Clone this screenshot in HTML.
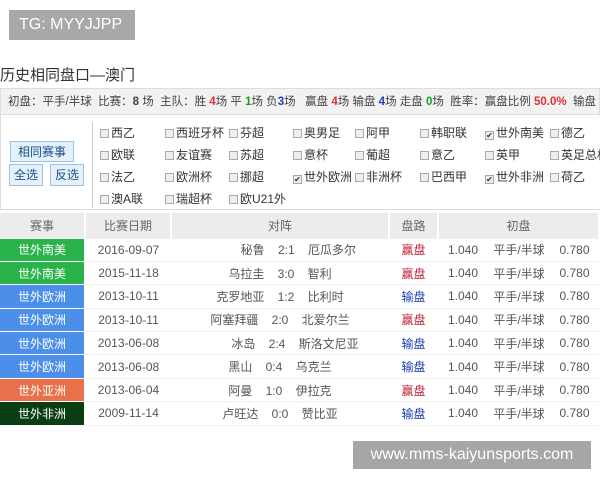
<!DOCTYPE html>
<html><head><meta charset="utf-8"><style>
*{margin:0;padding:0;box-sizing:border-box}
body{width:600px;height:480px;background:#fff;position:relative;overflow:hidden;font-family:"Liberation Sans","Noto Sans CJK SC",sans-serif;color:#333}
.a{position:absolute;white-space:nowrap}
.tg{left:9px;top:10px;width:126px;height:30px;background:#a8a8a8;color:#fff;font-size:16px;line-height:30px;padding-left:10px}
.title{left:0;top:64px;font-size:15px;color:#333}
.stats{left:0;top:88px;width:600px;height:27px;background:#f2f2f2;border:1px solid #ddd;font-size:11.5px;line-height:26px;padding-left:7px;color:#444;overflow:hidden}
.r{color:#e03030;font-weight:bold}.g{color:#1aa01a;font-weight:bold}.b{color:#2a3ab0;font-weight:bold}
.filter{left:0;top:115px;width:600px;height:95px;border-left:1px solid #ddd;border-bottom:1px solid #ddd}
.btn{position:absolute;background:#e4f1fb;border:1px solid #9cc3e3;color:#1a4f8a;font-size:12px;text-align:center;line-height:20px}
.vd{left:92px;top:122px;width:1px;height:86px;background:#ccc}
.cb{font-size:12px;color:#333}
.cb i{display:inline-block;width:9px;height:9px;border:1px solid #aaa;background:#eee;margin-right:2px;vertical-align:-1px;font-style:normal;font-size:8px;line-height:8px;text-align:center;color:#333}
table{position:absolute;left:0;top:213px;width:600px;border-collapse:collapse;font-size:12px;color:#555}
td,th{height:23.4px;text-align:center;border-bottom:1px solid #f0f0f0;font-weight:normal;padding:0}
th{background:#ececec;color:#666;height:25px;border-right:2px solid #fff}
td.l{color:#fff;border-right:2px solid #fff;border-bottom:1px solid #fff}
.gr{background:#2bb34b}.bl{background:#4c8fea}.or{background:#e8714c}.dg{background:#0a3d12}
.w{color:#c0203a}.s{color:#1a3ab0}
.foot{left:353px;top:441px;width:238px;height:28px;background:#a6a6a6;color:#fff;font-size:16px;line-height:28px;text-align:center}
</style></head><body>
<div class="a tg">TG: MYYJJPP</div>
<div class="a title">历史相同盘口—澳门</div>
<div class="a stats">初盘：平手/半球&nbsp; 比赛：<b>8</b> 场&nbsp; 主队：胜 <span class="r">4</span>场 平 <span class="g">1</span>场 负<span class="b">3</span>场&nbsp;&nbsp; 赢盘 <span class="r">4</span>场 输盘 <span class="b">4</span>场 走盘 <span class="g">0</span>场&nbsp; 胜率：赢盘比例 <span class="r">50.0%</span>&nbsp; 输盘</div>
<div class="a filter"></div>
<div class="btn" style="left:10px;top:141px;width:64px;height:21px">相同赛事</div>
<div class="btn" style="left:9px;top:164px;width:34px;height:22px">全选</div>
<div class="btn" style="left:50px;top:164px;width:34px;height:22px">反选</div>
<div class="a vd"></div>
<div class="a cb" style="left:100px;top:124px"><i></i>西乙</div>
<div class="a cb" style="left:165px;top:124px"><i></i>西班牙杯</div>
<div class="a cb" style="left:229px;top:124px"><i></i>芬超</div>
<div class="a cb" style="left:293px;top:124px"><i></i>奥男足</div>
<div class="a cb" style="left:355px;top:124px"><i></i>阿甲</div>
<div class="a cb" style="left:420px;top:124px"><i></i>韩职联</div>
<div class="a cb" style="left:485px;top:124px"><i>✔</i>世外南美</div>
<div class="a cb" style="left:550px;top:124px"><i></i>德乙</div>
<div class="a cb" style="left:100px;top:146px"><i></i>欧联</div>
<div class="a cb" style="left:165px;top:146px"><i></i>友谊赛</div>
<div class="a cb" style="left:229px;top:146px"><i></i>苏超</div>
<div class="a cb" style="left:293px;top:146px"><i></i>意杯</div>
<div class="a cb" style="left:355px;top:146px"><i></i>葡超</div>
<div class="a cb" style="left:420px;top:146px"><i></i>意乙</div>
<div class="a cb" style="left:485px;top:146px"><i></i>英甲</div>
<div class="a cb" style="left:550px;top:146px"><i></i>英足总杯</div>
<div class="a cb" style="left:100px;top:168px"><i></i>法乙</div>
<div class="a cb" style="left:165px;top:168px"><i></i>欧洲杯</div>
<div class="a cb" style="left:229px;top:168px"><i></i>挪超</div>
<div class="a cb" style="left:293px;top:168px"><i>✔</i>世外欧洲</div>
<div class="a cb" style="left:355px;top:168px"><i></i>非洲杯</div>
<div class="a cb" style="left:420px;top:168px"><i></i>巴西甲</div>
<div class="a cb" style="left:485px;top:168px"><i>✔</i>世外非洲</div>
<div class="a cb" style="left:550px;top:168px"><i></i>荷乙</div>
<div class="a cb" style="left:100px;top:190px"><i></i>澳A联</div>
<div class="a cb" style="left:165px;top:190px"><i></i>瑞超杯</div>
<div class="a cb" style="left:229px;top:190px"><i></i>欧U21外</div>
<table>
<colgroup><col style="width:85px"><col style="width:86px"><col style="width:218px"><col style="width:49px"><col style="width:50px"><col style="width:62px"><col></colgroup>
<tr><th>赛事</th><th>比赛日期</th><th>对阵</th><th>盘路</th><th colspan="3">初盘</th></tr>
<tr><td class="l gr">世外南美</td><td>2016-09-07</td><td>&nbsp;&nbsp;&nbsp;&nbsp;&nbsp;&nbsp;&nbsp;&nbsp;&nbsp;&nbsp;&nbsp;秘鲁 &nbsp;&nbsp; 2:1 &nbsp;&nbsp; 厄瓜多尔</td><td class="w">赢盘</td><td>1.040</td><td>平手/半球</td><td>0.780</td></tr>
<tr><td class="l gr">世外南美</td><td>2015-11-18</td><td>乌拉圭 &nbsp;&nbsp; 3:0 &nbsp;&nbsp; 智利</td><td class="w">赢盘</td><td>1.040</td><td>平手/半球</td><td>0.780</td></tr>
<tr><td class="l bl">世外欧洲</td><td>2013-10-11</td><td>克罗地亚 &nbsp;&nbsp; 1:2 &nbsp;&nbsp; 比利时</td><td class="s">输盘</td><td>1.040</td><td>平手/半球</td><td>0.780</td></tr>
<tr><td class="l bl">世外欧洲</td><td>2013-10-11</td><td>阿塞拜疆 &nbsp;&nbsp; 2:0 &nbsp;&nbsp; 北爱尔兰</td><td class="w">赢盘</td><td>1.040</td><td>平手/半球</td><td>0.780</td></tr>
<tr><td class="l bl">世外欧洲</td><td>2013-06-08</td><td>&nbsp;&nbsp;&nbsp;&nbsp;&nbsp;&nbsp;&nbsp;&nbsp;&nbsp;冰岛 &nbsp;&nbsp; 2:4 &nbsp;&nbsp; 斯洛文尼亚</td><td class="s">输盘</td><td>1.040</td><td>平手/半球</td><td>0.780</td></tr>
<tr><td class="l bl">世外欧洲</td><td>2013-06-08</td><td>黑山 &nbsp;&nbsp; 0:4 &nbsp;&nbsp; 乌克兰</td><td class="s">输盘</td><td>1.040</td><td>平手/半球</td><td>0.780</td></tr>
<tr><td class="l or">世外亚洲</td><td>2013-06-04</td><td>阿曼 &nbsp;&nbsp; 1:0 &nbsp;&nbsp; 伊拉克</td><td class="w">赢盘</td><td>1.040</td><td>平手/半球</td><td>0.780</td></tr>
<tr><td class="l dg">世外非洲</td><td>2009-11-14</td><td>卢旺达 &nbsp;&nbsp; 0:0 &nbsp;&nbsp; 赞比亚</td><td class="s">输盘</td><td>1.040</td><td>平手/半球</td><td>0.780</td></tr>
</table>
<div class="a foot">www.mms-kaiyunsports.com</div>
</body></html>
